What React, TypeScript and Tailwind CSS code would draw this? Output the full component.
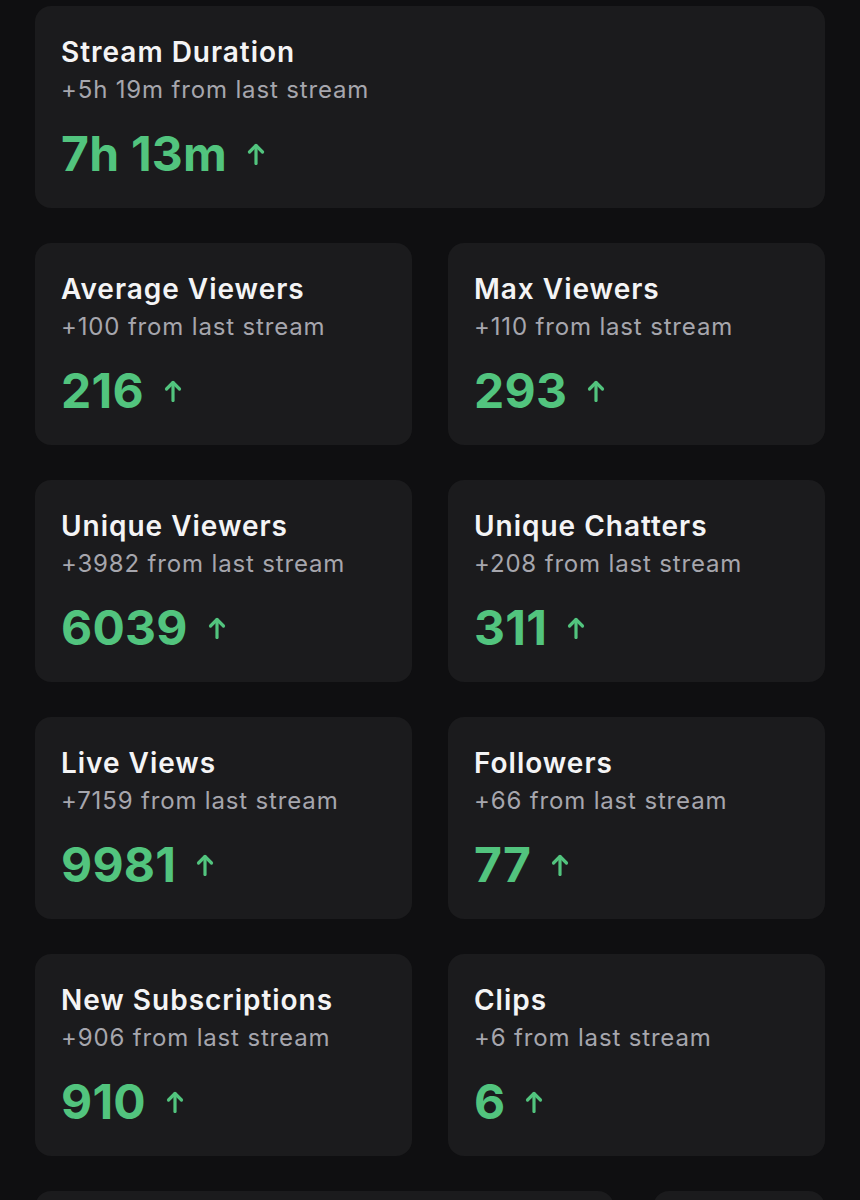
import React from "react";

type Stat = {
  title: string;
  delta: string;
  value: string;
};

const duration: Stat = { title: "Stream Duration", delta: "+5h 19m", value: "7h 13m" };

const stats: Stat[] = [
  { title: "Average Viewers", delta: "+100", value: "216" },
  { title: "Max Viewers", delta: "+110", value: "293" },
  { title: "Unique Viewers", delta: "+3982", value: "6039" },
  { title: "Unique Chatters", delta: "+208", value: "311" },
  { title: "Live Views", delta: "+7159", value: "9981" },
  { title: "Followers", delta: "+66", value: "77" },
  { title: "New Subscriptions", delta: "+906", value: "910" },
  { title: "Clips", delta: "+6", value: "6" },
];

function UpArrow() {
  return (
    <svg viewBox="0 0 18 22" className="w-[18px] h-[22px] ml-[20px] text-[#52c47e]" fill="none" stroke="currentColor" strokeWidth={3.2} strokeLinecap="round" strokeLinejoin="round">
      <path d="M9 20.5V2.5" />
      <path d="M2.5 9L9 2.5L15.5 9" />
    </svg>
  );
}

function StatCard({ stat }: { stat: Stat }) {
  return (
    <div className="rounded-[16px] bg-[#1b1b1d] pl-[26px] pr-4 pt-[29.5px] pb-[30.5px]">
      <div className="text-[28px] leading-[32px] font-semibold tracking-[0.035em] text-[#f4f4f5]">{stat.title}</div>
      <div className="mt-1.5 text-[24px] leading-[32px] tracking-[0.035em] text-[#a6a6ad]">{stat.delta} from last stream</div>
      <div className="mt-6 flex items-center">
        <span className="text-[48px] leading-[48px] font-bold tracking-[0.005em] text-[#52c47e]">{stat.value}</span>
        <UpArrow />
      </div>
    </div>
  );
}

export default function App() {
  return (
    <main className="w-full min-h-screen bg-[#0f0f11] font-['Inter','Noto_Sans',sans-serif]">
      <div className="flex flex-col gap-[35px] px-[35px] pt-[6px] pb-10">
        <StatCard stat={duration} />
        <div className="grid grid-cols-2 gap-x-[36px] gap-y-[35px]">
          {stats.map((s) => (
            <StatCard key={s.title} stat={s} />
          ))}
        </div>
        <div className="flex gap-[39px]">
          <div className="w-[579px] h-[200px] rounded-[16px] bg-[#1b1b1d]" />
          <div className="flex-1 h-[200px] rounded-[16px] bg-[#1b1b1d]" />
        </div>
      </div>
    </main>
  );
}
